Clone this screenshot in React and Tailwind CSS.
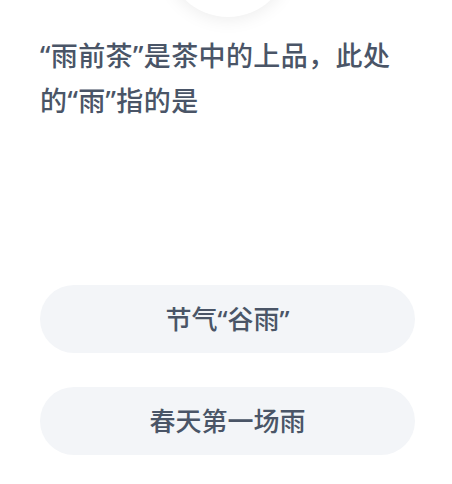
export default function App() {
  const opciones = ["节气“谷雨”", "春天第一场雨"];

  return (
    <div className="w-[452px] h-[484px] bg-white overflow-hidden" style={{ fontFamily: '"Noto Sans", "Noto Sans CJK SC", sans-serif' }}>
      {/* circulo decorativo arriba */}
      <div className="h-[33px] flex justify-center overflow-hidden pb-[12px] pl-[4px]">
        <div className="w-[124px] h-[124px] shrink-0 rounded-full bg-white -mt-[107px] shadow-[0_2px_18px_rgba(0,0,0,0.08)]" />
      </div>

      <p className="px-[40px] text-[27px] leading-[45px] tracking-[0.4px] font-medium text-[#4a5567]">
        “雨前茶”是茶中的上品，此处的“雨”指的是
      </p>

      <div className="flex flex-col gap-[34px] pl-[40px] pr-[37px] mt-[162px]">
        {opciones.map((o) => (
          <div key={o} className="h-[68px] rounded-full bg-[#f3f5f8] flex items-center justify-center text-[26px] font-medium text-[#4a5567]">
            {o}
          </div>
        ))}
      </div>
    </div>
  );
}
